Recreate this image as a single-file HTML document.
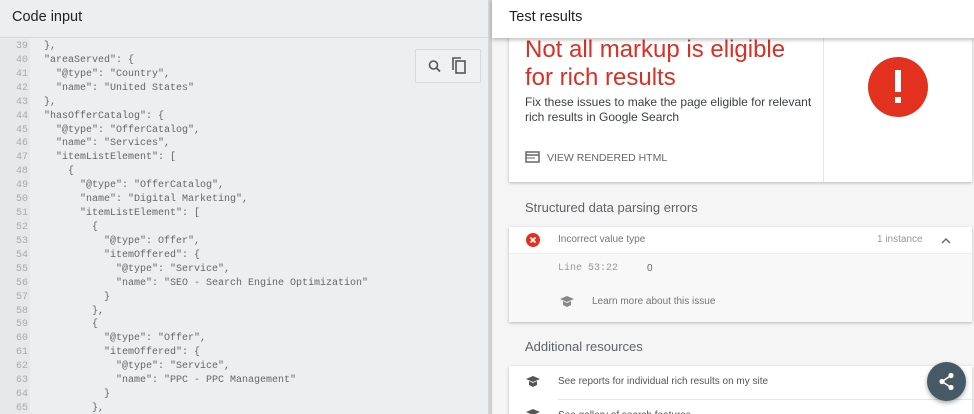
<!DOCTYPE html>
<html><head><meta charset="utf-8"><style>
*{margin:0;padding:0;box-sizing:border-box}
html,body{width:974px;height:414px;overflow:hidden}
body{font-family:"Liberation Sans",Arial,sans-serif;position:relative;background:#f5f5f5}
#left{position:absolute;left:0;top:0;width:491px;height:414px;background:#eceff1;overflow:hidden}
#lh{height:38px;border-bottom:1px solid #d6d9db;font-size:14.5px;color:#202124;padding:9px 12px;background:#eceff1}
#gut{position:absolute;left:0;top:39px;width:30px;height:380px;background:#e6e9eb}
pre{position:absolute;top:40px;left:0;font-family:"Liberation Mono",monospace;font-size:10px;line-height:13.92px;color:#62676b}
pre .n{display:inline-block;width:28px;text-align:right;color:#a7abae;margin-right:16px}
#tools{position:absolute;left:415px;top:49px;width:66px;height:34px;border:1px solid #d7dadc;background:#eef0f2}
#shadowL{position:absolute;left:488px;top:0;width:4px;height:414px;background:linear-gradient(90deg,#d5d7d9,#c9cbcd)}
#rh{position:absolute;left:492px;top:0;width:482px;height:38px;background:#fff;box-shadow:0 2px 4px rgba(0,0,0,.25);font-size:14.5px;color:#202124;padding:9px 17px;z-index:3}
.card{position:absolute;left:509px;width:463px;background:#fff;box-shadow:0 1px 3px rgba(0,0,0,.25);overflow:hidden}
.h2{position:absolute;left:525px;font-size:13px;color:#5f6368}
.g{color:#757575;font-size:10px}
</style></head><body>
<div id="left">
<div id="lh">Code input</div>
<div id="gut"></div>
<pre><span class="n">39</span>},
<span class="n">40</span>"areaServed": {
<span class="n">41</span>  "@type": "Country",
<span class="n">42</span>  "name": "United States"
<span class="n">43</span>},
<span class="n">44</span>"hasOfferCatalog": {
<span class="n">45</span>  "@type": "OfferCatalog",
<span class="n">46</span>  "name": "Services",
<span class="n">47</span>  "itemListElement": [
<span class="n">48</span>    {
<span class="n">49</span>      "@type": "OfferCatalog",
<span class="n">50</span>      "name": "Digital Marketing",
<span class="n">51</span>      "itemListElement": [
<span class="n">52</span>        {
<span class="n">53</span>          "@type": Offer",
<span class="n">54</span>          "itemOffered": {
<span class="n">55</span>            "@type": "Service",
<span class="n">56</span>            "name": "SEO - Search Engine Optimization"
<span class="n">57</span>          }
<span class="n">58</span>        },
<span class="n">59</span>        {
<span class="n">60</span>          "@type": "Offer",
<span class="n">61</span>          "itemOffered": {
<span class="n">62</span>            "@type": "Service",
<span class="n">63</span>            "name": "PPC - PPC Management"
<span class="n">64</span>          }
<span class="n">65</span>        },</pre>
<div id="tools">
<svg width="66" height="34" viewBox="0 0 66 34"><circle cx="17.5" cy="15" r="4" fill="none" stroke="#555" stroke-width="1.6"/><line x1="20.5" y1="18" x2="24" y2="21.5" stroke="#555" stroke-width="1.8"/><rect x="40" y="11" width="9" height="12" fill="none" stroke="#555" stroke-width="1.6"/><path d="M37 20V8h8" fill="none" stroke="#555" stroke-width="1.6"/></svg>
</div>
</div>
<div id="shadowL"></div>
<div id="rh">Test results</div>

<div class="card" style="top:30px;height:152px">
<div style="position:absolute;left:16px;top:6px;font-size:24px;line-height:28px;color:#d93025">Not all markup is eligible<br>for rich results</div>
<div style="position:absolute;left:16px;top:65px;font-size:12px;line-height:15px;color:#3c4043">Fix these issues to make the page eligible for relevant<br>rich results in Google Search</div>
<svg style="position:absolute;left:16px;top:121px" width="16" height="13"><rect x="1" y="1" width="13" height="10" fill="none" stroke="#666" stroke-width="1.5"/><line x1="1" y1="4" x2="14" y2="4" stroke="#666" stroke-width="1.5"/><line x1="1" y1="7" x2="10" y2="7" stroke="#666"/></svg>
<div style="position:absolute;left:38px;top:122px;font-size:10.5px;color:#666">VIEW RENDERED HTML</div>
<div style="position:absolute;left:314px;top:0;width:1px;height:152px;background:#e6e6e6"></div>
<svg style="position:absolute;left:359px;top:27px" width="60" height="60"><circle cx="30" cy="30" r="30" fill="#e2321f"/><rect x="27" y="13" width="6" height="22" fill="#fff"/><rect x="27" y="40" width="6" height="6" fill="#fff"/></svg>
</div>

<div class="h2" style="top:200px">Structured data parsing errors</div>
<div class="card" style="top:227px;height:95px;background:#f8f8f8">
<div style="height:27px;background:#fff;border-bottom:1px solid #eee;position:relative">
<svg style="position:absolute;left:17px;top:6px" width="14" height="14"><circle cx="7" cy="7" r="7" fill="#e2321f"/><path d="M4.5 4.5l5 5M9.5 4.5l-5 5" stroke="#fff" stroke-width="1.8"/></svg>
<div class="g" style="position:absolute;left:49px;top:7px">Incorrect value type</div>
<div class="g" style="position:absolute;left:368px;top:7px;color:#999">1 instance</div>
<svg style="position:absolute;left:431px;top:9px" width="12" height="10"><path d="M2 7l4-4 4 4" fill="none" stroke="#666" stroke-width="1.4"/></svg>
</div>
<div style="position:absolute;left:49px;top:36px;font-family:'Liberation Mono',monospace;font-size:10px;color:#999">Line 53:22</div>
<div class="g" style="position:absolute;left:138px;top:36px;color:#666">0</div>
<svg style="position:absolute;left:50px;top:68px" width="16" height="13"><path d="M1 4l7-3 7 3-7 3z" fill="#888"/><path d="M4 6v4l4 2 4-2V6l-4 2z" fill="#888"/></svg>
<div class="g" style="position:absolute;left:83px;top:69px">Learn more about this issue</div>
</div>

<div class="h2" style="top:339px">Additional resources</div>
<div class="card" style="top:366px;height:60px">
<svg style="position:absolute;left:16px;top:9px" width="16" height="13"><path d="M1 4l7-3 7 3-7 3z" fill="#555"/><path d="M4 6v4l4 2 4-2V6l-4 2z" fill="#555"/></svg>
<div class="g" style="position:absolute;left:49px;top:10px;color:#555">See reports for individual rich results on my site</div>
<div style="position:absolute;left:49px;top:33px;width:414px;height:1px;background:#e6e6e6"></div>
<svg style="position:absolute;left:16px;top:42px" width="16" height="13"><path d="M1 4l7-3 7 3-7 3z" fill="#555"/></svg>
<div class="g" style="position:absolute;left:49px;top:44px;color:#555">See gallery of search features</div>
</div>
<div style="position:absolute;left:927px;top:362px;width:39px;height:39px;border-radius:50%;background:#455a64;box-shadow:0 2px 5px rgba(0,0,0,.35)">
<svg width="39" height="39"><circle cx="24" cy="13.5" r="2.6" fill="#fff"/><circle cx="15" cy="19.5" r="2.6" fill="#fff"/><circle cx="24" cy="25.5" r="2.6" fill="#fff"/><path d="M24 13.5L15 19.5 24 25.5" fill="none" stroke="#fff" stroke-width="1.5"/></svg>
</div>
</body></html>
